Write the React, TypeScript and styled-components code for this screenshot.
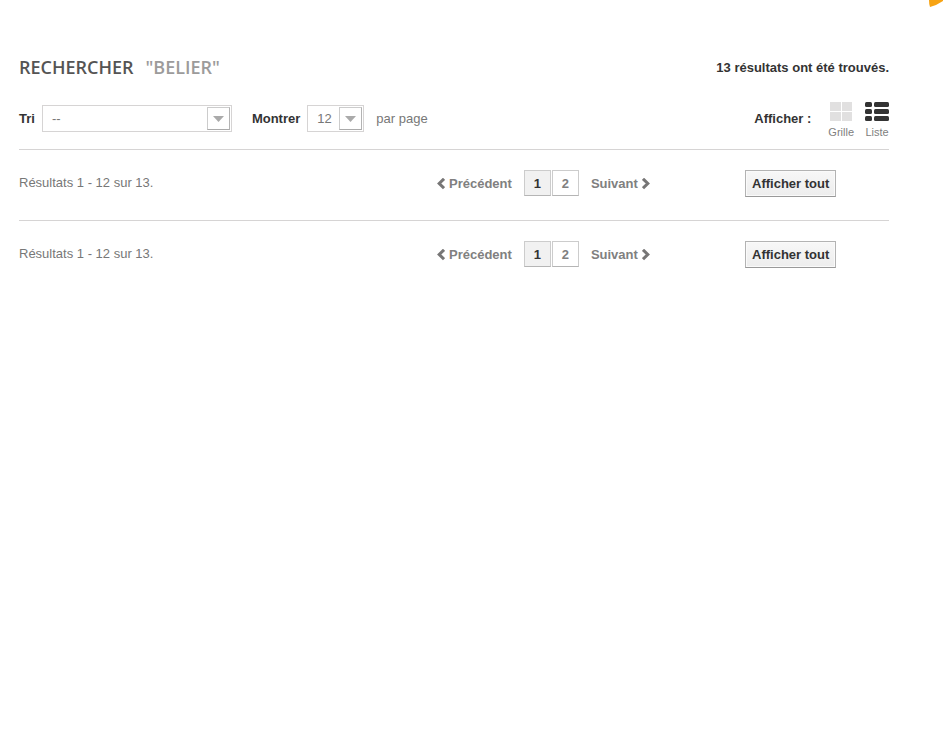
import React, { useState } from "react";
import styled, { createGlobalStyle } from "styled-components";

const GlobalStyle = createGlobalStyle`
  *, *::before, *::after { box-sizing: border-box; }
  body {
    margin: 0;
    background: #fff;
    color: #777;
    font: 13px/18px "Liberation Sans", Arial, sans-serif;
  }
  button, select { font: inherit; color: inherit; }
`;

const Page = styled.div`
  position: relative;
  overflow: hidden;
  padding: 55px 54px 24px 19px;
`;

const Corner = styled.svg`
  position: absolute;
  top: 0;
  right: 0;
`;

const Header = styled.header`
  display: flex;
  justify-content: space-between;
  align-items: flex-start;
  height: 25px;
`;

const Title = styled.h1`
  display: flex;
  gap: 12px;
  margin: 0;
  font: 600 18px/24px "Open Sans", sans-serif;
  color: #555454;
  text-transform: uppercase;
`;

const Query = styled.span`
  color: #9c9b9b;
`;

const Counter = styled.strong`
  padding-top: 4px;
  color: #333;
`;

const Toolbar = styled.div`
  display: flex;
  align-items: center;
  height: 70px;
  padding-top: 8px;
  border-bottom: 1px solid #d6d4d4;
`;

const Field = styled.div<{ $gap?: number }>`
  display: flex;
  align-items: center;
  gap: 7px;
  margin-right: ${(p) => p.$gap ?? 0}px;
`;

const Label = styled.label`
  font-weight: bold;
  color: #333;
`;

const SelectBox = styled.div<{ $width: number }>`
  display: grid;
  width: ${(p) => p.$width}px;
  height: 27px;
  border: 1px solid #d6d4d4;
  > * { grid-area: 1 / 1; }
`;

const Select = styled.select`
  appearance: none;
  width: 100%;
  padding: 0 28px 0 9px;
  border: 0;
  border-radius: 0;
  background: #fff;
`;

const Arrow = styled.span`
  display: flex;
  align-items: center;
  justify-content: center;
  justify-self: end;
  align-self: center;
  width: 23px;
  height: 23px;
  margin-right: 1px;
  border: 1px solid #ccc;
  border-right-color: #b3b3b3;
  border-bottom-color: #aaa;
  background: #fff;
  pointer-events: none;
`;

const Suffix = styled.span`
  margin-left: 5px;
`;

const Display = styled.div`
  display: flex;
  align-items: center;
  gap: 17px;
  margin-left: auto;
`;

const DisplayLabel = styled.strong`
  color: #333;
`;

const Views = styled.div`
  display: flex;
  gap: 11px;
  padding-top: 3px;
`;

const ViewButton = styled.button<{ $active: boolean }>`
  display: flex;
  flex-direction: column;
  align-items: center;
  gap: 3px;
  padding: 0;
  border: 0;
  background: none;
  font-size: 11px;
  line-height: 14px;
  color: #808080;
  cursor: pointer;
  svg { display: block; fill: ${(p) => (p.$active ? "#333" : "#e1e0e0")}; }
`;

const PagerRow = styled.section`
  display: grid;
  grid-template-columns: 418fr 308fr 144fr;
  align-items: center;
  padding: 20px 0 23px;
  & + & { border-top: 1px solid #d6d4d4; }
`;

const Summary = styled.div`
  padding-bottom: 2px;
`;

const Pages = styled.nav`
  display: flex;
  align-items: center;
  gap: 12px;
  font-weight: bold;
`;

const Step = styled.a`
  display: flex;
  align-items: center;
  gap: 4px;
  color: #808080;
  text-decoration: none;
`;

const Numbers = styled.div`
  display: flex;
  gap: 1px;
  padding-bottom: 1px;
`;

const PageNumber = styled.a<{ $current?: boolean }>`
  width: 27px;
  height: 26px;
  border: 1px solid #ccc;
  border-bottom-color: #b5b5b5;
  line-height: 26px;
  text-align: center;
  text-decoration: none;
  color: ${(p) => (p.$current ? "#333" : "#808080")};
  background: ${(p) => (p.$current ? "#f1f1f1" : "#fff")};
`;

const ShowAll = styled.button`
  justify-self: start;
  height: 27px;
  padding: 0 6px;
  border: 1px solid #b3b3b3;
  border-bottom-color: #999;
  background: linear-gradient(#f7f7f7, #ededed);
  box-shadow: inset 0 0 0 1px #fafafa;
  font-weight: bold;
  line-height: 25px;
  color: #333;
  white-space: nowrap;
  cursor: pointer;
`;

function Chevron({ right = false }: { right?: boolean }) {
  return (
    <svg width="8" height="12" viewBox="0 0 8 12" fill="none" stroke="#777676" strokeWidth="3" aria-hidden="true">
      <path d={right ? "M1 .8 5.8 5.5 1 10.2" : "M7 .8 2.2 5.5 7 10.2"} />
    </svg>
  );
}

function DropArrow() {
  return (
    <Arrow>
      <svg width="11" height="6" viewBox="0 0 11 6" fill="#aaa" aria-hidden="true">
        <path d="M0 0h11L5.5 6z" />
      </svg>
    </Arrow>
  );
}

function Pagination() {
  return (
    <PagerRow>
      <Summary>Résultats 1 - 12 sur 13.</Summary>
      <Pages aria-label="Pagination">
        <Step href="#precedent"><Chevron />Précédent</Step>
        <Numbers>
          <PageNumber href="#page-1" $current aria-current="page">1</PageNumber>
          <PageNumber href="#page-2">2</PageNumber>
        </Numbers>
        <Step href="#suivant">Suivant<Chevron right /></Step>
      </Pages>
      <ShowAll type="button">Afficher tout</ShowAll>
    </PagerRow>
  );
}

export default function App() {
  const [view, setView] = useState("list");
  return (
    <>
      <GlobalStyle />
      <Page>
        <Corner width="14" height="8" viewBox="0 0 14 8" aria-hidden="true">
          <path d="M0 0h14v1L7 5 1 7Q0 4 0 0z" fill="#f7a313" />
        </Corner>
        <Header>
          <Title>Rechercher <Query>"belier"</Query></Title>
          <Counter>13 résultats ont été trouvés.</Counter>
        </Header>
        <Toolbar>
          <Field $gap={20}>
            <Label htmlFor="sort">Tri</Label>
            <SelectBox $width={190}>
              <Select id="sort"><option>--</option></Select>
              <DropArrow />
            </SelectBox>
          </Field>
          <Field>
            <Label htmlFor="count">Montrer</Label>
            <SelectBox $width={57}>
              <Select id="count"><option>12</option></Select>
              <DropArrow />
            </SelectBox>
            <Suffix>par page</Suffix>
          </Field>
          <Display>
            <DisplayLabel>Afficher :</DisplayLabel>
            <Views>
              <ViewButton type="button" $active={view === "grid"} onClick={() => setView("grid")}>
                <svg width="22" height="20" viewBox="0 0 22 20" aria-hidden="true">
                  <path d="M0 0h11v9H0zM12 0h10v9H12zM0 10h11v9H0zM12 10h10v9H12z" />
                </svg>
                Grille
              </ViewButton>
              <ViewButton type="button" $active={view === "list"} onClick={() => setView("list")}>
                <svg width="24" height="20" viewBox="0 0 24 20" aria-hidden="true">
                  {[0, 7, 14].map((y) => (
                    <g key={y}>
                      <rect y={y} width="7" height="5" rx="1.5" />
                      <rect x="9" y={y} width="15" height="5" rx="1.5" />
                    </g>
                  ))}
                </svg>
                Liste
              </ViewButton>
            </Views>
          </Display>
        </Toolbar>
        <Pagination />
        <Pagination />
      </Page>
    </>
  );
}
